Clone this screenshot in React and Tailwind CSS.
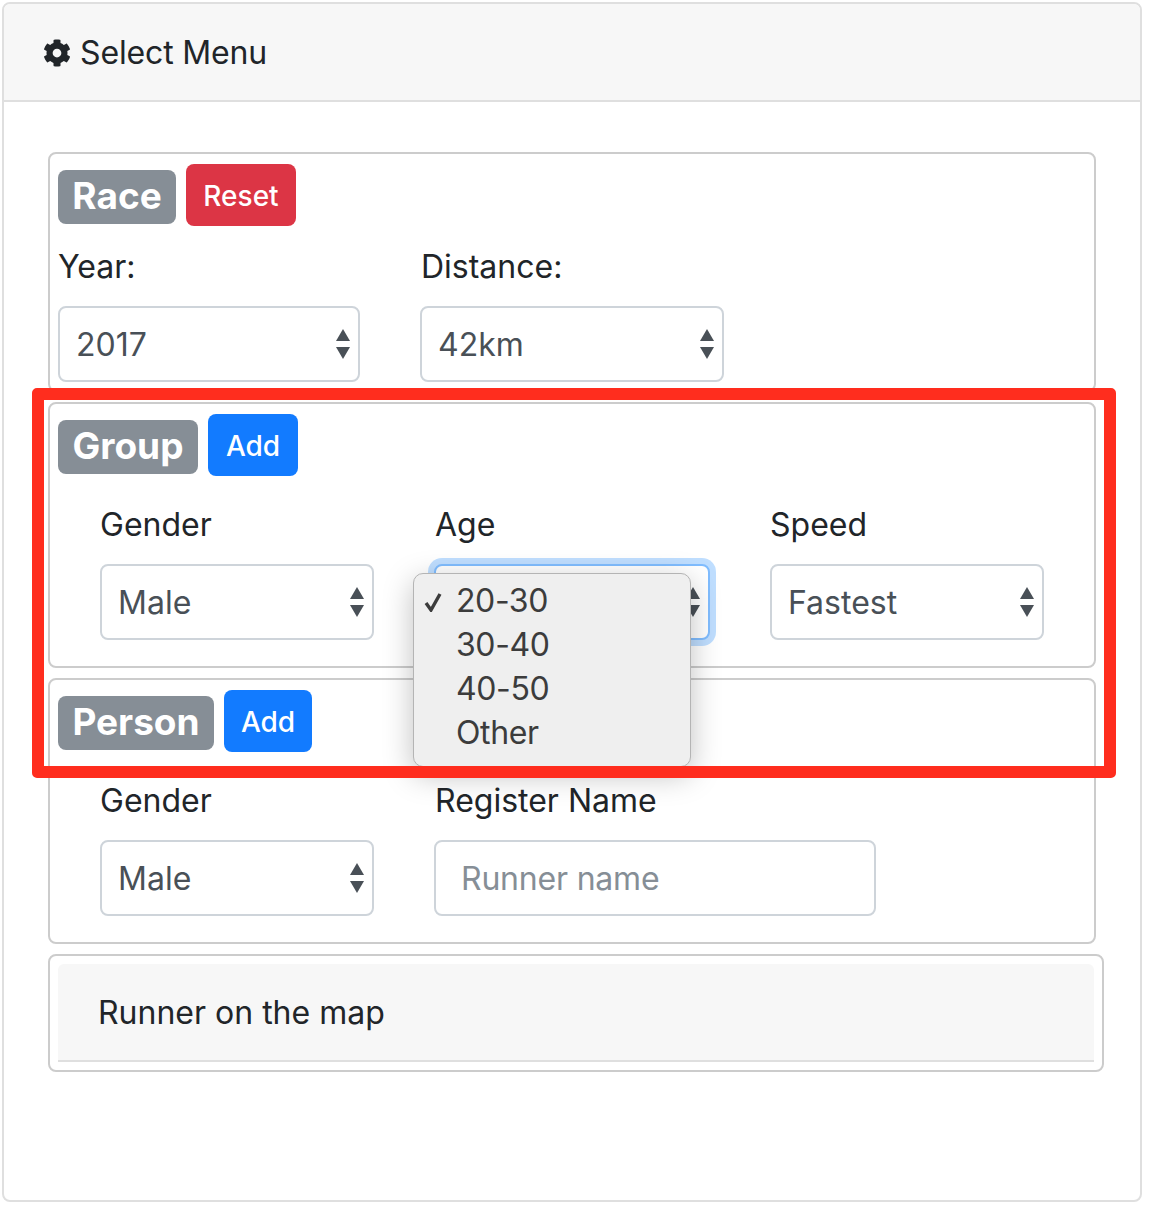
import { FaCog } from "react-icons/fa";

const Arrows = () => (
  <svg className="absolute right-[7px] top-1/2 -translate-y-1/2" width="16" height="30" viewBox="0 0 16 30" fill="#495057">
    <path d="M8 0 L15 12 H1 Z" />
    <path d="M1 18 H15 L8 30 Z" />
  </svg>
);

const SelectBox = ({ value, className }) => (
  <div className={`relative h-[76px] flex items-center pl-[16px] pt-[2px] bg-white border-2 border-[#ced4da] rounded-lg text-[#495057] ${className}`}>
    <span>{value}</span>
    <Arrows />
  </div>
);

const Legend = ({ title, action, danger, titleWidth, actionWidth }) => (
  <div className="flex items-start gap-[10px]">
    <span className={`mt-[6px] h-[54px] pb-[3px] flex items-center justify-center rounded-lg bg-[#868e96] text-white text-[37px] font-bold ${titleWidth}`}>{title}</span>
    <button className={`h-[62px] pt-[2px] rounded-lg text-white text-[28px] font-medium ${actionWidth} ${danger ? "bg-[#dc3545]" : "bg-[#127bff]"}`}>{action}</button>
  </div>
);

const Field = ({ label, children, className }) => (
  <div className={className}>
    <label className="block h-[48px] leading-[48px] mb-[15px]">{label}</label>
    {children}
  </div>
);

const App = () => {
  return (
    <div className="relative w-[1152px] h-[1208px] p-[2px] bg-white text-[32px] text-[#212529] font-['Inter',sans-serif]">
      <div className="h-[1200px] w-[1140px] border-2 border-[#dfdfdf] rounded-lg">
        {/* Header */}
        <div className="h-[98px] flex items-center gap-[9px] pl-[39px] pt-[2px] bg-[#f7f7f7] border-b-2 border-[#dfdfdf] rounded-t-md">
          <FaCog className="w-[28px] h-[28px]" />
          <span className="tracking-[-0.15px]">Select Menu</span>
        </div>

        <div className="pt-[50px] px-[44px] flex flex-col gap-[10px]">
          {/* Race */}
          <section className="h-[240px] pt-[10px] px-[8px] border-2 border-[#ccc] rounded-lg">
            <Legend title="Race" action="Reset" danger titleWidth="w-[118px]" actionWidth="w-[110px]" />
            <div className="flex gap-[60px] mt-[17px]">
              <div className="w-[302px]">
                <label className="block h-[48px] leading-[48px] mb-[15px]">Year:</label>
                <SelectBox value="2017" />
              </div>
              <div className="w-[304px]">
                <label className="block h-[48px] leading-[48px] mb-[15px] pl-[1px]">Distance:</label>
                <SelectBox value="42km" />
              </div>
            </div>
          </section>

          {/* Group */}
          <section className="h-[266px] pt-[10px] px-[8px] border-2 border-[#ccc] rounded-lg">
            <Legend title="Group" action="Add" titleWidth="w-[140px]" actionWidth="w-[90px]" />
            <div className="flex gap-[60px] pl-[42px] mt-[25px]">
              <Field label="Gender" className="w-[274px]">
                <SelectBox value="Male" />
              </Field>
              <Field label="Age" className="w-[276px] [&>label]:pl-[1px]">
                <div className="relative h-[76px] bg-white border-2 border-[#80bdff] rounded-lg ring-[6px] ring-[#007bff]/25">
                  <Arrows />
                </div>
              </Field>
              <Field label="Speed" className="w-[274px]">
                <SelectBox value="Fastest" />
              </Field>
            </div>
          </section>

          {/* Person */}
          <section className="h-[266px] pt-[10px] px-[8px] border-2 border-[#ccc] rounded-lg">
            <Legend title="Person" action="Add" titleWidth="w-[156px]" actionWidth="w-[88px]" />
            <div className="flex gap-[60px] pl-[42px] mt-[25px]">
              <Field label="Gender" className="w-[274px]">
                <SelectBox value="Male" />
              </Field>
              <Field label="Register Name" className="w-[442px] [&>label]:pl-[1px]">
                <input
                  placeholder="Runner name"
                  className="w-full h-[76px] pl-[25px] pt-[1px] border-2 border-[#ced4da] rounded-lg outline-none tracking-[-0.2px] placeholder:text-[#868e96]"
                />
              </Field>
            </div>
          </section>

          {/* Map */}
          <section className="h-[118px] mr-[-8px] pt-[8px] px-[8px] border-2 border-[#ccc] rounded-lg">
            <div className="h-[98px] flex items-center pl-[40px] pt-[2px] bg-[#f7f7f7] border-b-2 border-[#dfdfdf] rounded-t-md">
              Runner on the map
            </div>
          </section>
        </div>
      </div>

      {/* Open dropdown */}
      <ul className="absolute left-[413px] top-[573px] w-[278px] h-[194px] pt-[5px] bg-[#efefef] border border-[#b4b4b4] rounded-[10px] text-[#3c3c3c] leading-[44px] tracking-[-0.4px] shadow-[0_8px_30px_rgba(0,0,0,0.25)]">
        <li className="relative pl-[42px]">
          <svg className="absolute left-[10px] top-[13px]" width="19" height="20" viewBox="0 0 19 20" fill="none" stroke="#3c3c3c" strokeWidth="3.4">
            <path d="M2 11 L7 18 L16 2" />
          </svg>
          20-30
        </li>
        <li className="pl-[42px]">30-40</li>
        <li className="pl-[42px]">40-50</li>
        <li className="pl-[42px]">Other</li>
      </ul>

      {/* Annotation frame, drawn over the dropdown's shadow */}
      <div className="absolute left-[32px] top-[388px] w-[1084px] h-[390px] border-[12px] border-[#ff2d1e] rounded-[5px]" />
    </div>
  );
};

export default App;
